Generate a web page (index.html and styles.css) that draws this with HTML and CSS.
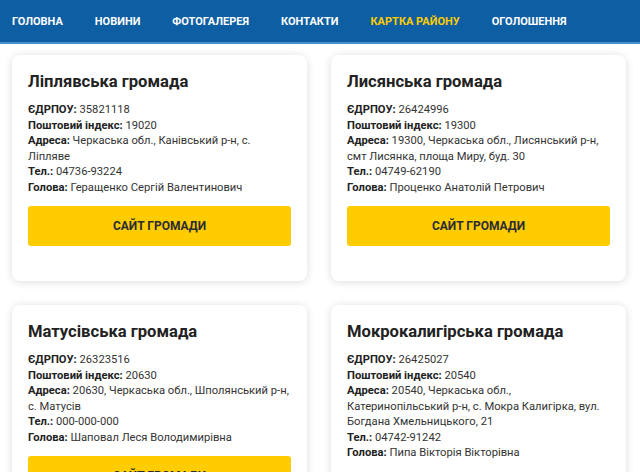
FILE: index.html
```html
<!DOCTYPE html>
<html lang="uk">
<head>
    <meta charset="UTF-8">
    <meta name="viewport" content="width=device-width, initial-scale=1.0">
    <title>Громади району</title>
    <link rel="stylesheet" href="styles.css">
</head>
<body>
    <nav class="topnav">
        <a href="#">Головна</a>
        <a href="#">Новини</a>
        <a href="#">Фотогалерея</a>
        <a href="#">Контакти</a>
        <a href="#" class="active">Картка району</a>
        <a href="#">Оголошення</a>
    </nav>

    <div class="cards">
        <!-- Ліплявська -->
        <div class="card">
            <h2>Ліплявська громада</h2>
            <div class="info">
                <b>ЄДРПОУ:</b> 35821118<br>
                <b>Поштовий індекс:</b> 19020<br>
                <b>Адреса:</b> Черкаська обл., Канівський р-н, с. Ліпляве<br>
                <b>Тел.:</b> 04736-93224<br>
                <b>Голова:</b> Геращенко Сергій Валентинович
            </div>
            <a href="#" class="site-btn">Сайт громади</a>
        </div>

        <!-- Лисянська -->
        <div class="card">
            <h2>Лисянська громада</h2>
            <div class="info">
                <b>ЄДРПОУ:</b> 26424996<br>
                <b>Поштовий індекс:</b> 19300<br>
                <b>Адреса:</b> 19300, Черкаська обл., Лисянський р-н, смт Лисянка, площа Миру, буд. 30<br>
                <b>Тел.:</b> 04749-62190<br>
                <b>Голова:</b> Проценко Анатолій Петрович
            </div>
            <a href="#" class="site-btn">Сайт громади</a>
        </div>

        <!-- Матусівська -->
        <div class="card">
            <h2>Матусівська громада</h2>
            <div class="info">
                <b>ЄДРПОУ:</b> 26323516<br>
                <b>Поштовий індекс:</b> 20630<br>
                <b>Адреса:</b> 20630, Черкаська обл., Шполянський р-н, с. Матусів<br>
                <b>Тел.:</b> 000-000-000<br>
                <b>Голова:</b> Шаповал Леся Володимирівна
            </div>
            <a href="#" class="site-btn">Сайт громади</a>
        </div>

        <!-- Мокрокалигірська -->
        <div class="card">
            <h2>Мокрокалигірська громада</h2>
            <div class="info">
                <b>ЄДРПОУ:</b> 26425027<br>
                <b>Поштовий індекс:</b> 20540<br>
                <b>Адреса:</b> 20540, Черкаська обл., Катеринопільський р-н, с. Мокра Калигірка, вул. Богдана Хмельницького, 21<br>
                <b>Тел.:</b> 04742-91242<br>
                <b>Голова:</b> Пипа Вікторія Вікторівна
            </div>
            <a href="#" class="site-btn">Сайт громади</a>
        </div>
    </div>
</body>
</html>
```

FILE: styles.css
```css
html, body {
    margin: 0;
    font-family: Roboto, "Noto Sans", Arial, sans-serif;
    background-color: #ffffff;
    color: #333;
}
.topnav {
    display: flex;
    align-items: center;
    gap: 32px;
    height: 42px;
    padding-left: 12px;
    background-color: #0d5ea3;
    border-bottom: 2px solid #4a90d0;
}
.topnav a {
    color: #ffffff;
    font-size: 11px;
    font-weight: bold;
    text-transform: uppercase;
    text-decoration: none;
}
.topnav a.active {
    color: #ffcc00;
}
.cards {
    display: grid;
    grid-template-columns: 1fr 1fr;
    gap: 24px;
    padding: 11px 14px 24px 12px;
}
.card {
    background-color: #fff;
    border-radius: 8px;
    box-shadow: 0 1px 8px rgba(0, 0, 0, 0.14);
    padding: 16px 16px 35px;
}
.card h2 {
    margin: 0 0 10px;
    font-size: 16.6px;
    line-height: 21px;
    color: #222;
}
.info {
    font-size: 11.2px;
    line-height: 15.5px;
    color: #333;
}
.info b {
    color: #222;
}
.site-btn {
    display: block;
    margin-top: 11px;
    height: 40px;
    line-height: 40px;
    text-align: center;
    background-color: #ffcc00;
    border-radius: 3px;
    color: #2b2b33;
    font-size: 12px;
    font-weight: bold;
    text-transform: uppercase;
    text-decoration: none;
}
```
